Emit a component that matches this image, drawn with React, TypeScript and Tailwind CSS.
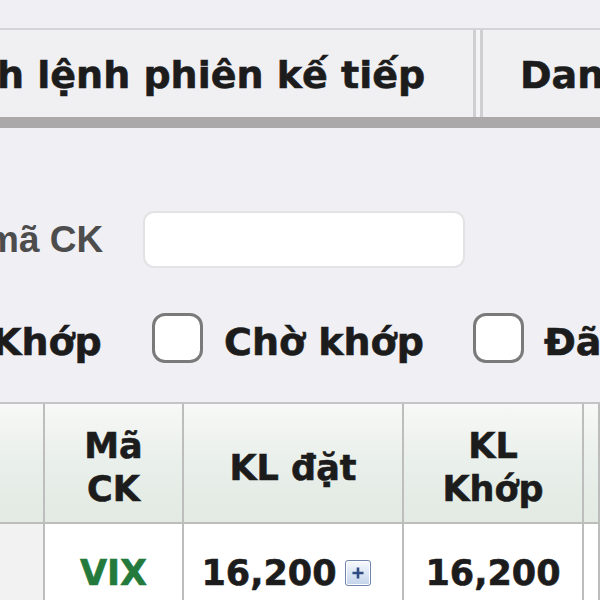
import React from "react";

function PlusIcon() {
  return (
    <span className="ml-[8px] inline-flex h-[26px] w-[26px] items-center justify-center rounded-[3px] border border-[#7083aa] bg-gradient-to-b from-[#f7fafd] to-[#c3d3ea] shadow-[inset_0_0_0_1px_#ffffff] [-webkit-text-stroke:0px]">
      <svg width="16" height="16" viewBox="0 0 16 16">
        <path d="M8 2.5v11M2.5 8h11" stroke="#2f4d82" strokeWidth="2.6" />
      </svg>
    </span>
  );
}

function Checkbox() {
  return (
    <span className="inline-block h-[50px] w-[51px] shrink-0 rounded-[13px] border-[3px] border-[#7a7a7a] bg-white" />
  );
}

export default function App() {
  const hdr =
    "flex h-full items-center justify-center border-r-2 border-[#bdbdbd] bg-gradient-to-b from-[#f7f8f7] via-[#e9efea] to-[#e2eae3] pt-[10px] text-center text-[35px] leading-[43px] font-bold text-[#1c1c1c] [-webkit-text-stroke:0.6px_#1c1c1c]";
  const cell =
    "flex h-full items-center justify-center border-r-2 border-[#bdbdbd] text-[35px] font-bold";
  return (
    <div className="h-[600px] w-[600px] overflow-hidden bg-[#f0f0f4] font-['DejaVu_Sans',sans-serif]">
      <div className="h-[30px] border-b-2 border-[#d4d4d8]" />
      <div className="flex h-[87px] bg-[#f0f0f3]">
        <div className="flex w-[476px] shrink-0 items-center overflow-hidden border-r-[3px] border-[#cfcfd2] pt-[3px]">
          <span className="-ml-[3px] whitespace-nowrap text-[38px] font-bold text-[#1c1c1c] [-webkit-text-stroke:0.6px_#1c1c1c]">
            h lệnh phiên kế tiếp
          </span>
        </div>
        <div className="w-[4px] shrink-0 bg-[#f4f4f6]" />
        <div className="flex flex-1 items-center overflow-hidden border-l-[3px] border-[#cfcfd2] pl-[37px] pt-[3px]">
          <span className="whitespace-nowrap text-[38px] font-bold text-[#1c1c1c] [-webkit-text-stroke:0.6px_#1c1c1c]">
            Danh sách lệnh
          </span>
        </div>
      </div>
      <div className="h-[11px] bg-[#aaa8a8]" />
      <div className="h-[274px]">
        <div className="flex items-center pt-[83px]">
          <span className="-ml-[14px] w-[157px] shrink-0 whitespace-nowrap font-['Liberation_Sans',sans-serif] text-[37px] font-bold text-[#4d4d4d]">
            mã CK
          </span>
          <div className="h-[57px] w-[322px] rounded-[11px] border-2 border-[#e3e3e6] bg-white" />
        </div>
        <div className="mt-[36px] flex items-center whitespace-nowrap text-[38px] font-bold text-[#1c1c1c] [-webkit-text-stroke:0.6px_#1c1c1c]">
          <span className="-ml-[8px] w-[160px] shrink-0 pt-[10px]">Khớp</span>
          <Checkbox />
          <span className="ml-[21px] w-[249px] shrink-0 pt-[10px]">Chờ khớp</span>
          <Checkbox />
          <span className="ml-[20px] pt-[10px]">Đã khớp</span>
        </div>
      </div>
      <div className="border-t-2 border-[#c4c4c4]">
        <div className="flex h-[120px] border-b-2 border-[#bdbdbd]">
          <div className={`${hdr} w-[45px]`} />
          <div className={`${hdr} w-[139px]`}>
            Mã
            <br />
            CK
          </div>
          <div className={`${hdr} w-[220px]`}>KL đặt</div>
          <div className={`${hdr} w-[180px]`}>
            KL
            <br />
            Khớp
          </div>
          <div className={`${hdr} flex-1`} />
        </div>
        <div className="flex h-[80px] bg-white">
          <div className={`${cell} w-[45px] bg-[#f2f2f2]`} />
          <div className={`${cell} w-[139px] bg-white pt-[18px] text-[#237a3c] [-webkit-text-stroke:0.6px_#237a3c]`}>VIX</div>
          <div className={`${cell} w-[220px] bg-white pr-[14px] pt-[18px] text-[#1c1c1c] [-webkit-text-stroke:0.6px_#1c1c1c]`}>
            16,200
            <PlusIcon />
          </div>
          <div className={`${cell} w-[180px] bg-white pt-[18px] text-[#1c1c1c] [-webkit-text-stroke:0.6px_#1c1c1c]`}>16,200</div>
          <div className={`${cell} flex-1 bg-white`} />
        </div>
      </div>
    </div>
  );
}
